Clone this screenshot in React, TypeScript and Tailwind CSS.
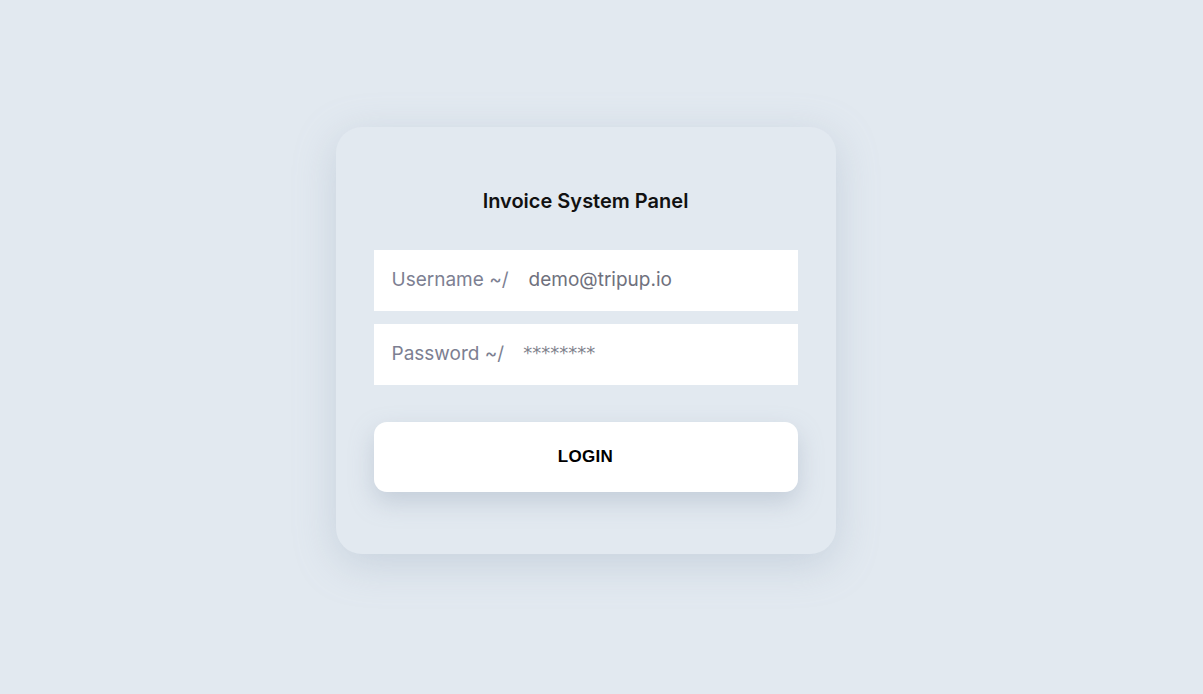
import React from "react";

export default function App() {
  return (
    <div className="min-h-screen w-full bg-[#e2e9f0] flex items-start justify-center pt-[127px] pr-[32px]" style={{ fontFamily: "Inter, 'Noto Sans', sans-serif" }}>
      <div className="w-[500px] h-[427px] rounded-[26px] bg-[#e2e9f0] shadow-[0_10px_40px_rgba(150,165,185,0.35)] px-[38px] pt-[62px] flex flex-col">
        <h1 className="text-center text-[20px] leading-[24px] font-semibold text-[#111]">Invoice System Panel</h1>
        <div className="mt-[37px] flex flex-col gap-[13px]">
          <div className="h-[61px] bg-white flex items-center px-[18px] text-[19px]">
            <span className="text-[#7d7f92]">Username ~/</span>
            <span className="ml-[20px] text-[#6f717d]">demo@tripup.io</span>
          </div>
          <div className="h-[61px] bg-white flex items-center px-[18px] text-[19px]">
            <span className="text-[#7d7f92]">Password ~/</span>
            <span className="ml-[19px] text-[#80828c] text-[18px] -translate-y-[2px]" style={{ fontFamily: "'DejaVu Sans', sans-serif" }}>********</span>
          </div>
        </div>
        <button className="mt-[37px] h-[70px] w-full rounded-[13px] bg-white shadow-[0_10px_25px_rgba(140,155,175,0.35)] flex items-center justify-center">
          <span className="text-[17px] font-bold text-black tracking-[0.3px]" style={{ fontFamily: "'Liberation Sans', Arial, sans-serif" }}>LOGIN</span>
        </button>
      </div>
    </div>
  );
}
